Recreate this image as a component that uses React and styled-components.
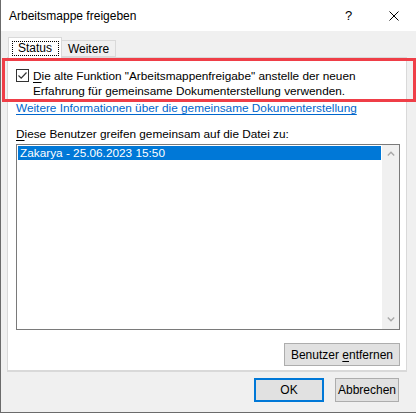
import React from "react";
import styled, { createGlobalStyle } from "styled-components";

const Global = createGlobalStyle`
  html, body { margin: 0; padding: 0; background: #ffffff; }
  body { font-family: "Liberation Sans", Arial, sans-serif; font-size: 12px; color: #000; }
  * { box-sizing: border-box; }
`;

const Window = styled.div`
  position: relative;
  width: 416px;
  height: 413px;
  display: flex;
  flex-direction: column;
  border-left: 1px solid #6b6b6b;
  border-bottom: 1px solid #6b6b6b;
  background: #f0f0f0;
  overflow: hidden;
`;

const TitleBar = styled.div`
  height: 31px;
  flex: none;
  display: flex;
  align-items: center;
  background: #ffffff;
  padding-left: 8px;
`;

const Title = styled.span`
  flex: 1;
  font-size: 12px;
  line-height: 16px;
  margin-top: 1px;
`;

const CaptionButton = styled.div`
  width: 45px;
  height: 31px;
  display: flex;
  align-items: center;
  justify-content: center;
  font-size: 13px;
  color: #000;
`;

const Body = styled.div`
  flex: 1;
  display: flex;
  flex-direction: column;
  padding: 7px 9px 0 6px;
`;

const TabRow = styled.div`
  display: flex;
  align-items: flex-end;
  height: 20px;
  padding-left: 1px;
  position: relative;
  z-index: 1;
  margin-bottom: -1px;
`;

const Tab = styled.div`
  width: 54px;
  height: ${(p) => (p.$active ? "21px" : "17px")};
  margin-bottom: ${(p) => (p.$active ? "0" : "1px")};
  background: ${(p) => (p.$active ? "#ffffff" : "#f0f0f0")};
  border: 1px solid #d9d9d9;
  border-bottom: ${(p) => (p.$active ? "none" : "1px solid #d9d9d9")};
  border-left: ${(p) => (p.$first ? "1px solid #d9d9d9" : "none")};
  display: flex;
  align-items: ${(p) => (p.$active ? "flex-start" : "center")};
  justify-content: center;
  padding-top: ${(p) => (p.$active ? "3px" : "0")};
  font-size: 12px;
`;

const FocusLabel = styled.span`
  display: inline-block;
  width: 47px;
  height: 15px;
  line-height: 13px;
  text-align: center;
  border: 1px dotted #000;
`;

const Panel = styled.div`
  width: 400px;
  height: 315px;
  background: #ffffff;
  border: 1px solid #d9d9d9;
  border-bottom: 2px solid #d9d9d9;
  padding: 11px 6px 0 8px;
  display: flex;
  flex-direction: column;
  font-size: 11.8px;
`;

const CheckRow = styled.label`
  display: flex;
  align-items: flex-start;
  gap: 4px;
  line-height: 15px;
`;

const CheckBox = styled.span`
  width: 13px;
  height: 13px;
  flex: none;
  border: 1px solid #333333;
  background: #ffffff;
  display: flex;
  align-items: center;
  justify-content: center;
`;

const Underline = styled.span`
  text-decoration: underline;
  text-underline-offset: 2px;
`;

const Link = styled.a`
  color: #0066cc;
  text-decoration: underline;
  text-underline-offset: 2px;
  line-height: 15px;
  margin-top: 2px;
  align-self: flex-start;
`;

const FieldLabel = styled.div`
  line-height: 15px;
  margin-top: 11px;
`;

const ListBox = styled.div`
  margin-top: 2px;
  width: 384px;
  height: 186px;
  border: 1px solid #7a7a7a;
  display: flex;
`;

const ListItems = styled.div`
  flex: 1;
  padding: 1px;
`;

const ListItem = styled.div`
  height: 14px;
  line-height: 14px;
  padding-left: 2px;
  background: ${(p) => (p.$selected ? "#0078d7" : "transparent")};
  color: ${(p) => (p.$selected ? "#ffffff" : "#000")};
`;

const ScrollBar = styled.div`
  width: 17px;
  background: #f0f0f0;
  display: flex;
  flex-direction: column;
  justify-content: space-between;
  align-items: center;
  padding: 6px 0 7px;
`;

const ButtonRow = styled.div`
  display: flex;
  justify-content: flex-end;
  gap: ${(p) => p.$gap || 0}px;
  margin-top: ${(p) => p.$top || 0}px;
  padding-right: ${(p) => p.$right || 0}px;
`;

const Button = styled.div`
  width: ${(p) => p.$w}px;
  height: ${(p) => p.$h || 23}px;
  background: #e1e1e1;
  border: ${(p) => (p.$default ? "2px solid #0078d7" : "1px solid #adadad")};
  display: flex;
  align-items: center;
  justify-content: center;
  font-size: 12px;
`;

const Highlight = styled.div`
  position: absolute;
  left: 1px;
  top: 58px;
  width: 414px;
  height: 44px;
  border: 3px solid #ef3e47;
  pointer-events: none;
`;

const Chevron = ({ up }) => (
  <svg width="8" height="5" viewBox="0 0 8 5">
    <path
      d={up ? "M0.8 4.4 L4 1.2 L7.2 4.4" : "M0.8 0.6 L4 3.8 L7.2 0.6"}
      fill="none"
      stroke="#a8a8a8"
      strokeWidth="1.4"
    />
  </svg>
);

export default function App() {
  return (
    <>
      <Global />
      <Window>
        <TitleBar>
          <Title>Arbeitsmappe freigeben</Title>
          <CaptionButton>?</CaptionButton>
          <CaptionButton>
            <svg width="10" height="10" viewBox="0 0 10 10">
              <path d="M0.5 0.5 L9.5 9.5 M9.5 0.5 L0.5 9.5" stroke="#000" strokeWidth="1" />
            </svg>
          </CaptionButton>
        </TitleBar>
        <Body>
          <TabRow>
            <Tab $active $first>
              <FocusLabel>Status</FocusLabel>
            </Tab>
            <Tab>Weitere</Tab>
          </TabRow>
          <Panel>
            <CheckRow>
              <CheckBox>
                <svg width="11" height="11" viewBox="0 0 11 11">
                  <path d="M1.5 5.5 L4.2 8.2 L9.5 2.5" fill="none" stroke="#333" strokeWidth="1.2" />
                </svg>
              </CheckBox>
              <span>
                <Underline>D</Underline>ie alte Funktion "Arbeitsmappenfreigabe" anstelle der neuen
                <br />
                Erfahrung für gemeinsame Dokumenterstellung verwenden.
              </span>
            </CheckRow>
            <Link>Weitere Informationen über die gemeinsame Dokumenterstellung</Link>
            <FieldLabel>
              <Underline>D</Underline>iese Benutzer greifen gemeinsam auf die Datei zu:
            </FieldLabel>
            <ListBox>
              <ListItems>
                <ListItem $selected>Zakarya - 25.06.2023 15:50</ListItem>
              </ListItems>
              <ScrollBar>
                <Chevron up />
                <Chevron />
              </ScrollBar>
            </ListBox>
            <ButtonRow $top={13} $right={0}>
              <Button $w={116}>
                Benutzer&nbsp;<Underline>e</Underline>ntfernen
              </Button>
            </ButtonRow>
          </Panel>
          <ButtonRow $top={6} $right={8} $gap={11}>
            <Button $w={70} $h={24} $default>
              OK
            </Button>
            <Button $w={64} $h={24}>
              Abbrechen
            </Button>
          </ButtonRow>
        </Body>
        <Highlight />
      </Window>
    </>
  );
}
